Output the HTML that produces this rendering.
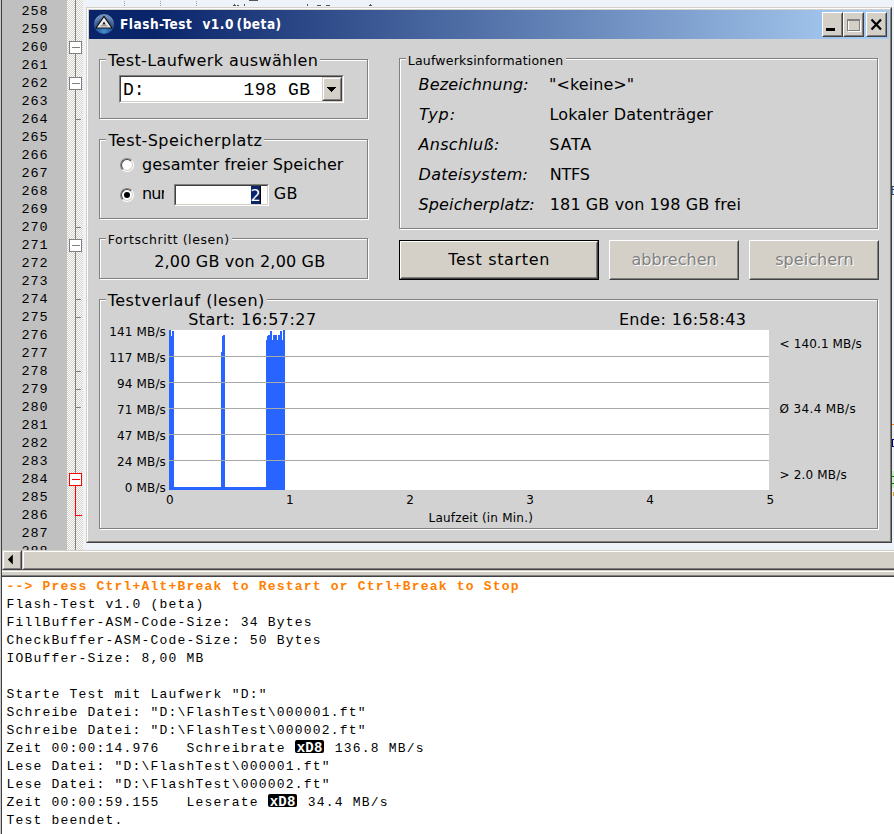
<!DOCTYPE html>
<html lang="de">
<head>
<meta charset="utf-8">
<title>Flash-Test v1.0 (beta)</title>
<style>
html,body{margin:0;padding:0;}
body{width:894px;height:834px;overflow:hidden;position:relative;background:#fff;font-family:"DejaVu Sans","Liberation Sans",sans-serif;color:#000;}
.abs{position:absolute;}
#editor{position:absolute;left:0;top:0;width:894px;height:550px;background:#eef2f9;overflow:hidden;}
#gutter{position:absolute;left:2px;top:0;width:65px;height:550px;background:#c0c0c0;}
#lborder0{position:absolute;left:0;top:0;width:1px;height:834px;background:#c8c8c8;}
#lborder1{position:absolute;left:1px;top:0;width:1px;height:834px;background:#404040;}
.ln{position:absolute;left:2px;width:46.5px;text-align:right;font-family:"Liberation Mono",monospace;font-size:13.5px;letter-spacing:0.9px;line-height:18px;height:18px;color:#000;}
#fold{position:absolute;left:67px;top:0;width:16px;height:550px;background-color:#e9e9e9;background-image:conic-gradient(#fff 25%,#d4d0c8 0 50%,#fff 0 75%,#d4d0c8 0);background-size:2px 2px;}
#win{position:absolute;left:86px;top:7px;width:806px;height:536px;background:#d2d2d2;box-sizing:border-box;border:1px solid;border-color:#d4d0c8 #404040 #404040 #d4d0c8;}
#win2{position:absolute;left:0;top:0;right:0;bottom:0;border:1px solid;border-color:#fff #808080 #808080 #fff;}
#title{position:absolute;left:89px;top:10px;width:800px;height:29px;background:linear-gradient(90deg,#0a246a 0%,#0a246a 8%,#a6caf0 96%,#a6caf0 100%);}
#ttext{position:absolute;left:120px;top:14px;font-family:"DejaVu Sans Condensed","DejaVu Sans","Liberation Sans",sans-serif;font-weight:bold;font-size:13.5px;line-height:20px;color:#fff;white-space:pre;letter-spacing:0.5px;}
.cb{position:absolute;top:12px;height:25px;width:21px;background:#d4d0c8;box-sizing:border-box;border:1px solid;border-color:#fff #404040 #404040 #fff;}
.cb:after{content:"";position:absolute;left:0;top:0;right:0;bottom:0;border:1px solid;border-color:#d4d0c8 #808080 #808080 #d4d0c8;}
.gb{position:absolute;box-sizing:border-box;border:1px solid #808080;box-shadow:1px 1px 0 #fff, inset 1px 1px 0 #fff;}
.tx{position:absolute;white-space:pre;}
.lg{background:#d2d2d2;padding:0 2px;}
.yl{left:96px;width:70px;text-align:right;font-size:12px;line-height:16px;letter-spacing:0.15px;}
.xl{width:20px;text-align:center;font-size:12px;line-height:16px;}
.sunken{position:absolute;box-sizing:border-box;background:#fff;border:1px solid;border-color:#808080 #fff #fff #808080;}
.sunken:before{content:"";position:absolute;left:0;top:0;right:0;bottom:0;border:1px solid;border-color:#404040 #d4d0c8 #d4d0c8 #404040;}
.btn{position:absolute;box-sizing:border-box;background:#d4d0c8;border:1px solid;border-color:#fff #404040 #404040 #fff;}
.btn:before{content:"";position:absolute;left:0;top:0;right:0;bottom:0;border:1px solid;border-color:#d4d0c8 #808080 #808080 #d4d0c8;}
.btn2{border-color:#d4d0c8 #404040 #404040 #d4d0c8;}
.btn2:before{border-color:#fff #808080 #808080 #fff;}
.dis{color:#808080;text-shadow:1px 1px 0 #fff;}
.radio{position:absolute;width:14px;height:14px;box-sizing:border-box;border-radius:50%;background:#fff;border:1px solid;border-color:#808080 #fff #fff #808080;}
.radio:before{content:"";position:absolute;left:0;top:0;right:0;bottom:0;border-radius:50%;border:1px solid;border-color:#404040 #d4d0c8 #d4d0c8 #404040;}
.mono18{font-family:"Liberation Mono",monospace;font-size:18px;line-height:22px;}
#hs{position:absolute;left:2px;top:550px;width:892px;height:20px;background:#d4d0c8;}
#split{position:absolute;left:2px;top:570px;width:892px;height:7px;background:#d4d0c8;}
#con{position:absolute;left:2px;top:577px;width:892px;height:257px;background:#fff;}
.cl{position:absolute;left:6.6px;font-family:"Liberation Mono",monospace;font-size:13px;letter-spacing:1.2px;line-height:18px;height:18px;white-space:pre;color:#000;}
.or{color:#ff8000;}
.inv{display:inline-block;vertical-align:top;width:29px;height:13px;margin:0 1.5px 0 0.5px;border-radius:2px;background:#000;color:#fff;font-weight:bold;font-size:14px;line-height:17px;text-align:center;letter-spacing:0.2px;}
</style>
</head>
<body>
<div id="editor">
<div id="gutter"></div>
<div class="ln" style="top:3px">258</div>
<div class="ln" style="top:21px">259</div>
<div class="ln" style="top:39px">260</div>
<div class="ln" style="top:57px">261</div>
<div class="ln" style="top:75px">262</div>
<div class="ln" style="top:93px">263</div>
<div class="ln" style="top:111px">264</div>
<div class="ln" style="top:129px">265</div>
<div class="ln" style="top:147px">266</div>
<div class="ln" style="top:165px">267</div>
<div class="ln" style="top:183px">268</div>
<div class="ln" style="top:201px">269</div>
<div class="ln" style="top:219px">270</div>
<div class="ln" style="top:237px">271</div>
<div class="ln" style="top:255px">272</div>
<div class="ln" style="top:273px">273</div>
<div class="ln" style="top:291px">274</div>
<div class="ln" style="top:309px">275</div>
<div class="ln" style="top:327px">276</div>
<div class="ln" style="top:345px">277</div>
<div class="ln" style="top:363px">278</div>
<div class="ln" style="top:381px">279</div>
<div class="ln" style="top:399px">280</div>
<div class="ln" style="top:417px">281</div>
<div class="ln" style="top:435px">282</div>
<div class="ln" style="top:453px">283</div>
<div class="ln" style="top:471px">284</div>
<div class="ln" style="top:489px">285</div>
<div class="ln" style="top:507px">286</div>
<div class="ln" style="top:525px">287</div>
<div class="ln" style="top:543px">288</div>
<div id="fold"></div>
<svg class="abs" style="left:230px;top:0" width="150" height="7" shape-rendering="crispEdges"><g fill="#555"><rect x="19" y="0" width="9" height="1"/><rect x="3" y="5" width="3" height="1"/><rect x="4" y="4" width="1" height="1"/><rect x="7" y="5" width="2" height="1"/><rect x="14" y="4" width="1" height="2"/><rect x="77" y="4" width="1" height="2"/><rect x="87" y="5" width="4" height="1"/><rect x="96" y="5" width="4" height="1"/><rect x="139" y="5" width="3" height="1"/><rect x="140" y="4" width="1" height="1"/></g></svg>
<svg class="abs" style="left:120px;top:0" width="90" height="7" shape-rendering="crispEdges"><g fill="#a0a0a0"><rect x="4" y="1" width="1" height="1"/><rect x="4" y="3" width="1" height="1"/><rect x="4" y="5" width="1" height="1"/><rect x="40" y="1" width="1" height="1"/><rect x="40" y="3" width="1" height="1"/><rect x="40" y="5" width="1" height="1"/><rect x="76" y="1" width="1" height="1"/><rect x="76" y="3" width="1" height="1"/><rect x="76" y="5" width="1" height="1"/></g></svg>
<svg class="abs" style="left:67px;top:0" width="16" height="550" shape-rendering="crispEdges">
<rect x="8" y="0" width="1" height="479" fill="#808080"/>
<rect x="8" y="119" width="6" height="1" fill="#808080"/>
<rect x="8" y="227" width="6" height="1" fill="#808080"/>
<rect x="8" y="299" width="6" height="1" fill="#808080"/>
<rect x="8" y="317" width="6" height="1" fill="#808080"/>
<rect x="8" y="371" width="6" height="1" fill="#808080"/>
<rect x="8" y="389" width="6" height="1" fill="#808080"/>
<rect x="8" y="407" width="6" height="1" fill="#808080"/>
<rect x="2.5" y="41.5" width="12" height="12" fill="#fff" stroke="#808080"/><rect x="5" y="47" width="8" height="1" fill="#808080"/>
<rect x="2.5" y="77.5" width="12" height="12" fill="#fff" stroke="#808080"/><rect x="5" y="83" width="8" height="1" fill="#808080"/>
<rect x="2.5" y="239.5" width="12" height="12" fill="#fff" stroke="#808080"/><rect x="5" y="245" width="8" height="1" fill="#808080"/>
<rect x="8" y="479" width="1" height="37" fill="#ff0000"/>
<rect x="8" y="515" width="7" height="1" fill="#ff0000"/>
<rect x="8" y="516" width="1" height="34" fill="#808080"/>
<rect x="2.5" y="473.5" width="12" height="12" fill="#fff" stroke="#ff0000"/><rect x="5" y="479" width="8" height="1" fill="#ff0000"/>
</svg>
</div>
<svg class="abs" style="left:892px;top:180px" width="2" height="330" shape-rendering="crispEdges">
<rect x="0" y="6" width="2" height="1" fill="#3a3a5a"/><rect x="0" y="7" width="1" height="2" fill="#4a86d8"/><rect x="0" y="9" width="2" height="1" fill="#3a3a5a"/><rect x="0" y="10" width="1" height="4" fill="#4a86d8"/><rect x="0" y="14" width="2" height="1" fill="#3a3a5a"/>
<rect x="0" y="244" width="2" height="1" fill="#ff8000"/>
<rect x="0" y="259" width="2" height="1" fill="#000080"/><rect x="0" y="260" width="1" height="6" fill="#000080"/><rect x="0" y="266" width="2" height="1" fill="#000080"/>
<rect x="0" y="291" width="2" height="17" fill="#c8f0c8"/><rect x="0" y="296" width="2" height="1" fill="#008000"/><rect x="0" y="303" width="2" height="1" fill="#008000"/>
<rect x="1" y="312" width="1" height="4" fill="#e0a000"/>
</svg>
<div id="lborder0"></div><div id="lborder1"></div>

<div id="win"><div id="win2"></div><div class="abs" style="left:1px;top:1px;right:1px;bottom:1px;border:1px solid #d4d0c8"></div></div>
<div id="title"></div>
<svg class="abs" style="left:93px;top:13px" width="22" height="22" viewBox="0 0 22 22">
<defs><radialGradient id="ig" cx="50%" cy="88%" r="75%"><stop offset="0" stop-color="#4690d4"/><stop offset="0.35" stop-color="#2c66a6"/><stop offset="0.7" stop-color="#34588e"/><stop offset="1" stop-color="#6f8fbc"/></radialGradient></defs>
<circle cx="11" cy="11" r="10" fill="url(#ig)"/>
<path d="M11 3.4 L19 15 H3 Z" fill="#ececec" stroke="#101010" stroke-width="1.2" stroke-linejoin="round"/>
<path d="M11 8.6 L12.8 11.6 H9.2 Z" fill="#1c1c1c"/>
<rect x="7.5" y="12.2" width="7" height="1.2" fill="#8a8a8a"/>
</svg>
<div id="ttext">Flash-Test<span style="word-spacing:0.3px">  </span>v1.0<span style="word-spacing:-2px"> </span>(beta)</div>
<div class="cb" style="left:822px"><svg class="abs" style="left:0;top:0" width="19" height="23" shape-rendering="crispEdges"><rect x="3" y="15" width="9" height="3" fill="#000"/></svg></div>
<div class="cb" style="left:843px"><svg class="abs" style="left:0;top:0" width="19" height="23" shape-rendering="crispEdges"><rect x="4.5" y="7.5" width="12" height="11" fill="none" stroke="#fff"/><rect x="3.5" y="6.5" width="12" height="11" fill="none" stroke="#808080"/><rect x="3" y="6" width="13" height="2" fill="#808080"/></svg></div>
<div class="cb" style="left:866px"><svg class="abs" style="left:0;top:0" width="19" height="22"><path d="M4.5 6.5 L14 16.5 M14 6.5 L4.5 16.5" stroke="#000" stroke-width="2.2" fill="none"/></svg></div>

<!-- group boxes -->
<div class="gb" style="left:99px;top:59px;width:269px;height:60px"></div>
<div class="gb" style="left:99px;top:139px;width:269px;height:80px"></div>
<div class="gb" style="left:99px;top:238px;width:269px;height:41px"></div>
<div class="gb" style="left:399px;top:58px;width:479px;height:171px"></div>
<div class="gb" style="left:99px;top:299px;width:779px;height:230px"></div>

<!-- combobox -->
<div class="sunken" style="left:119px;top:75px;width:225px;height:28px"></div>
<div class="tx mono18" style="left:123px;top:78.5px">D:</div>
<div class="tx mono18" style="left:243.5px;top:78.5px;letter-spacing:0.35px">198 GB</div>
<div class="btn btn2" style="left:322px;top:77px;width:20px;height:24px"><svg class="abs" style="left:0;top:0" width="18" height="22" shape-rendering="crispEdges"><path d="M4 9h9v1h-1v1h-1v1h-1v1h-1v1h-1v-1h-1v-1h-1v-1h-1v-1h-1z" fill="#000"/></svg></div>

<!-- radios -->
<div class="radio" style="left:120px;top:158px"></div>
<div class="radio" style="left:120px;top:188px"></div>
<div class="abs" style="left:124px;top:192px;width:6px;height:6px;border-radius:50%;background:#000"></div>
<div class="abs" style="left:141px;top:184.2px;width:23px;height:20px;overflow:hidden"><div class="tx" style="left:1px;top:0;font-size:16px;line-height:20px;letter-spacing:-0.9px">nur</div></div>
<div class="sunken" style="left:174px;top:184px;width:95px;height:22px"></div>
<div class="abs" style="left:251px;top:186px;width:9px;height:18px;background:#0a246a"></div>
<div class="tx" style="left:250.5px;top:185.7px;font-size:16px;line-height:20px;color:#fff;width:10px;text-align:center">2</div>
<div class="abs" style="left:260px;top:186px;width:1px;height:18px;background:#000"></div>

<!-- buttons -->
<div class="abs" style="left:399px;top:240px;width:200px;height:40px;background:#000"></div>
<div class="btn" style="left:400px;top:241px;width:198px;height:38px"></div>
<div class="btn" style="left:609px;top:240px;width:130px;height:40px"></div>
<div class="btn" style="left:749px;top:240px;width:130px;height:40px"></div>

<!-- chart -->
<svg class="abs" style="left:169px;top:330px" width="600" height="160" shape-rendering="crispEdges">
<rect width="600" height="160" fill="#fff"/>
<path d="M0,160V0H1V0H2V6H3V1H4V1H5V157H6V157H7V157H8V157H9V157H10V157H11V157H12V157H13V157H14V157H15V157H16V157H17V157H18V157H19V157H20V157H21V157H22V157H23V157H24V157H25V157H26V157H27V157H28V157H29V157H30V157H31V157H32V157H33V157H34V157H35V157H36V157H37V157H38V157H39V157H40V157H41V157H42V157H43V157H44V157H45V157H46V157H47V157H48V157H49V157H50V157H51V157H52V22H53V6H54V5H55V5H56V157H57V157H58V157H59V157H60V157H61V157H62V157H63V157H64V157H65V157H66V157H67V157H68V157H69V157H70V157H71V157H72V157H73V157H74V157H75V157H76V157H77V157H78V157H79V157H80V157H81V157H82V157H83V157H84V157H85V157H86V157H87V157H88V157H89V157H90V157H91V157H92V157H93V157H94V157H95V157H96V157H97V10H98V6H99V5H100V5H101V1H102V1H103V10H104V5H105V5H106V5H107V5H108V10H109V5H110V5H111V1H112V1H113V10H114V0H115V0H116V160Z" fill="#2864ff"/>
<g fill="#a9a9a9"><rect y="26" width="600" height="1"/><rect y="52" width="600" height="1"/><rect y="78" width="600" height="1"/><rect y="104" width="600" height="1"/><rect y="130" width="600" height="1"/></g>
</svg>
<div class="tx yl" style="top:323.5px">141 MB/s</div>
<div class="tx yl" style="top:349.5px">117 MB/s</div>
<div class="tx yl" style="top:375.5px">94 MB/s</div>
<div class="tx yl" style="top:401.5px">71 MB/s</div>
<div class="tx yl" style="top:427.5px">47 MB/s</div>
<div class="tx yl" style="top:453.5px">24 MB/s</div>
<div class="tx yl" style="top:479.5px">0 MB/s</div>
<div class="tx xl" style="left:159.8px;top:492.4px">0</div>
<div class="tx xl" style="left:279.9px;top:492.4px">1</div>
<div class="tx xl" style="left:400.0px;top:492.4px">2</div>
<div class="tx xl" style="left:520.1px;top:492.4px">3</div>
<div class="tx xl" style="left:640.2px;top:492.4px">4</div>
<div class="tx xl" style="left:760.3px;top:492.4px">5</div>

<div class="tx lg" style="left:106.0px;top:51.2px;font-size:16px;line-height:20px;letter-spacing:0.4px;">Test-Laufwerk auswählen</div>
<div class="tx lg" style="left:106.4px;top:131.2px;font-size:16px;line-height:20px;letter-spacing:0.42px;">Test-Speicherplatz</div>
<div class="tx" style="left:142.0px;top:154.7px;font-size:16px;line-height:20px;letter-spacing:0.1px;">gesamter freier Speicher</div>
<div class="tx" style="left:273.7px;top:184.2px;font-size:16px;line-height:20px;letter-spacing:0.37px;">GB</div>
<div class="tx lg" style="left:105.7px;top:232.4px;font-size:12.5px;line-height:16px;letter-spacing:0.57px;">Fortschritt (lesen)</div>
<div class="tx" style="left:154.2px;top:251.7px;font-size:16px;line-height:20px;letter-spacing:0.18px;">2,00 GB von 2,00 GB</div>
<div class="tx lg" style="left:105.7px;top:291.2px;font-size:16px;line-height:20px;letter-spacing:0.5px;">Testverlauf (lesen)</div>
<div class="tx" style="left:188.2px;top:309.5px;font-size:16px;line-height:20px;letter-spacing:0.47px;">Start: 16:57:27</div>
<div class="tx" style="left:618.9px;top:309.5px;font-size:16px;line-height:20px;letter-spacing:0.34px;">Ende: 16:58:43</div>
<div class="tx lg" style="left:405.8px;top:52.7px;font-size:12.5px;line-height:16px;letter-spacing:0.2px;">Laufwerksinformationen</div>
<div class="tx" style="left:418.5px;top:75.3px;font-size:16px;line-height:20px;font-style:italic;letter-spacing:0.16px;">Bezeichnung:</div>
<div class="tx" style="left:418.9px;top:105.3px;font-size:16px;line-height:20px;font-style:italic;letter-spacing:0.91px;">Typ:</div>
<div class="tx" style="left:418.5px;top:135.3px;font-size:16px;line-height:20px;font-style:italic;letter-spacing:0.3px;">Anschluß:</div>
<div class="tx" style="left:418.5px;top:165.3px;font-size:16px;line-height:20px;font-style:italic;letter-spacing:0.32px;">Dateisystem:</div>
<div class="tx" style="left:418.5px;top:195.3px;font-size:16px;line-height:20px;font-style:italic;letter-spacing:0.14px;">Speicherplatz:</div>
<div class="tx" style="left:549.0px;top:75.3px;font-size:16px;line-height:20px;letter-spacing:0.09px;">"&lt;keine&gt;"</div>
<div class="tx" style="left:549.5px;top:105.3px;font-size:16px;line-height:20px;letter-spacing:0.14px;">Lokaler Datenträger</div>
<div class="tx" style="left:549.2px;top:135.3px;font-size:16px;line-height:20px;letter-spacing:0.77px;">SATA</div>
<div class="tx" style="left:549.7px;top:165.3px;font-size:16px;line-height:20px;letter-spacing:-0.2px;">NTFS</div>
<div class="tx" style="left:549.8px;top:195.3px;font-size:16px;line-height:20px;letter-spacing:0.11px;">181 GB von 198 GB frei</div>
<div class="tx" style="left:448.2px;top:249.8px;font-size:16px;line-height:20px;letter-spacing:0.67px;">Test starten</div>
<div class="tx dis" style="left:631.4px;top:249.8px;font-size:16px;line-height:20px;letter-spacing:0.02px;">abbrechen</div>
<div class="tx dis" style="left:775.2px;top:249.8px;font-size:16px;line-height:20px;letter-spacing:0.05px;">speichern</div>
<div class="tx" style="left:779.6px;top:336.0px;font-size:12px;line-height:16px;letter-spacing:0.12px;">&lt; 140.1 MB/s</div>
<div class="tx" style="left:779.6px;top:401.0px;font-size:12px;line-height:16px;letter-spacing:0.34px;">Ø 34.4 MB/s</div>
<div class="tx" style="left:779.6px;top:467.0px;font-size:12px;line-height:16px;letter-spacing:0.16px;">&gt; 2.0 MB/s</div>
<div class="tx" style="left:428.5px;top:510.0px;font-size:12px;line-height:16px;letter-spacing:0.22px;">Laufzeit (in Min.)</div>

<div id="hs"></div>
<div class="btn btn2" style="left:2px;top:550px;width:20px;height:20px"><svg class="abs" style="left:0;top:0" width="18" height="18"><path d="M9.8 3.5v10l-5-5z" fill="#000"/></svg></div>
<div class="btn btn2" style="left:22px;top:550px;width:880px;height:20px"></div>
<div id="split"></div>
<div class="abs" style="left:2px;top:571px;width:892px;height:1px;background:#fff"></div>
<div class="abs" style="left:2px;top:575px;width:892px;height:1px;background:#808080"></div>
<div class="abs" style="left:2px;top:576px;width:892px;height:1px;background:#404040"></div>
<div id="con"></div>
<div class="cl" style="top:578px"><b class="or">--&gt; Press Ctrl+Alt+Break to Restart or Ctrl+Break to Stop</b></div>
<div class="cl" style="top:596px">Flash-Test v1.0 (beta)</div>
<div class="cl" style="top:614px">FillBuffer-ASM-Code-Size: 34 Bytes</div>
<div class="cl" style="top:632px">CheckBuffer-ASM-Code-Size: 50 Bytes</div>
<div class="cl" style="top:650px">IOBuffer-Size: 8,00 MB</div>
<div class="cl" style="top:668px"></div>
<div class="cl" style="top:686px">Starte Test mit Laufwerk "D:"</div>
<div class="cl" style="top:704px">Schreibe Datei: "D:\FlashTest\000001.ft"</div>
<div class="cl" style="top:722px">Schreibe Datei: "D:\FlashTest\000002.ft"</div>
<div class="cl" style="top:740px">Zeit 00:00:14.976   Schreibrate <span class="inv">xD8</span> 136.8 MB/s</div>
<div class="cl" style="top:758px">Lese Datei: "D:\FlashTest\000001.ft"</div>
<div class="cl" style="top:776px">Lese Datei: "D:\FlashTest\000002.ft"</div>
<div class="cl" style="top:794px">Zeit 00:00:59.155   Leserate <span class="inv">xD8</span> 34.4 MB/s</div>
<div class="cl" style="top:812px">Test beendet.</div>
</body>
</html>
